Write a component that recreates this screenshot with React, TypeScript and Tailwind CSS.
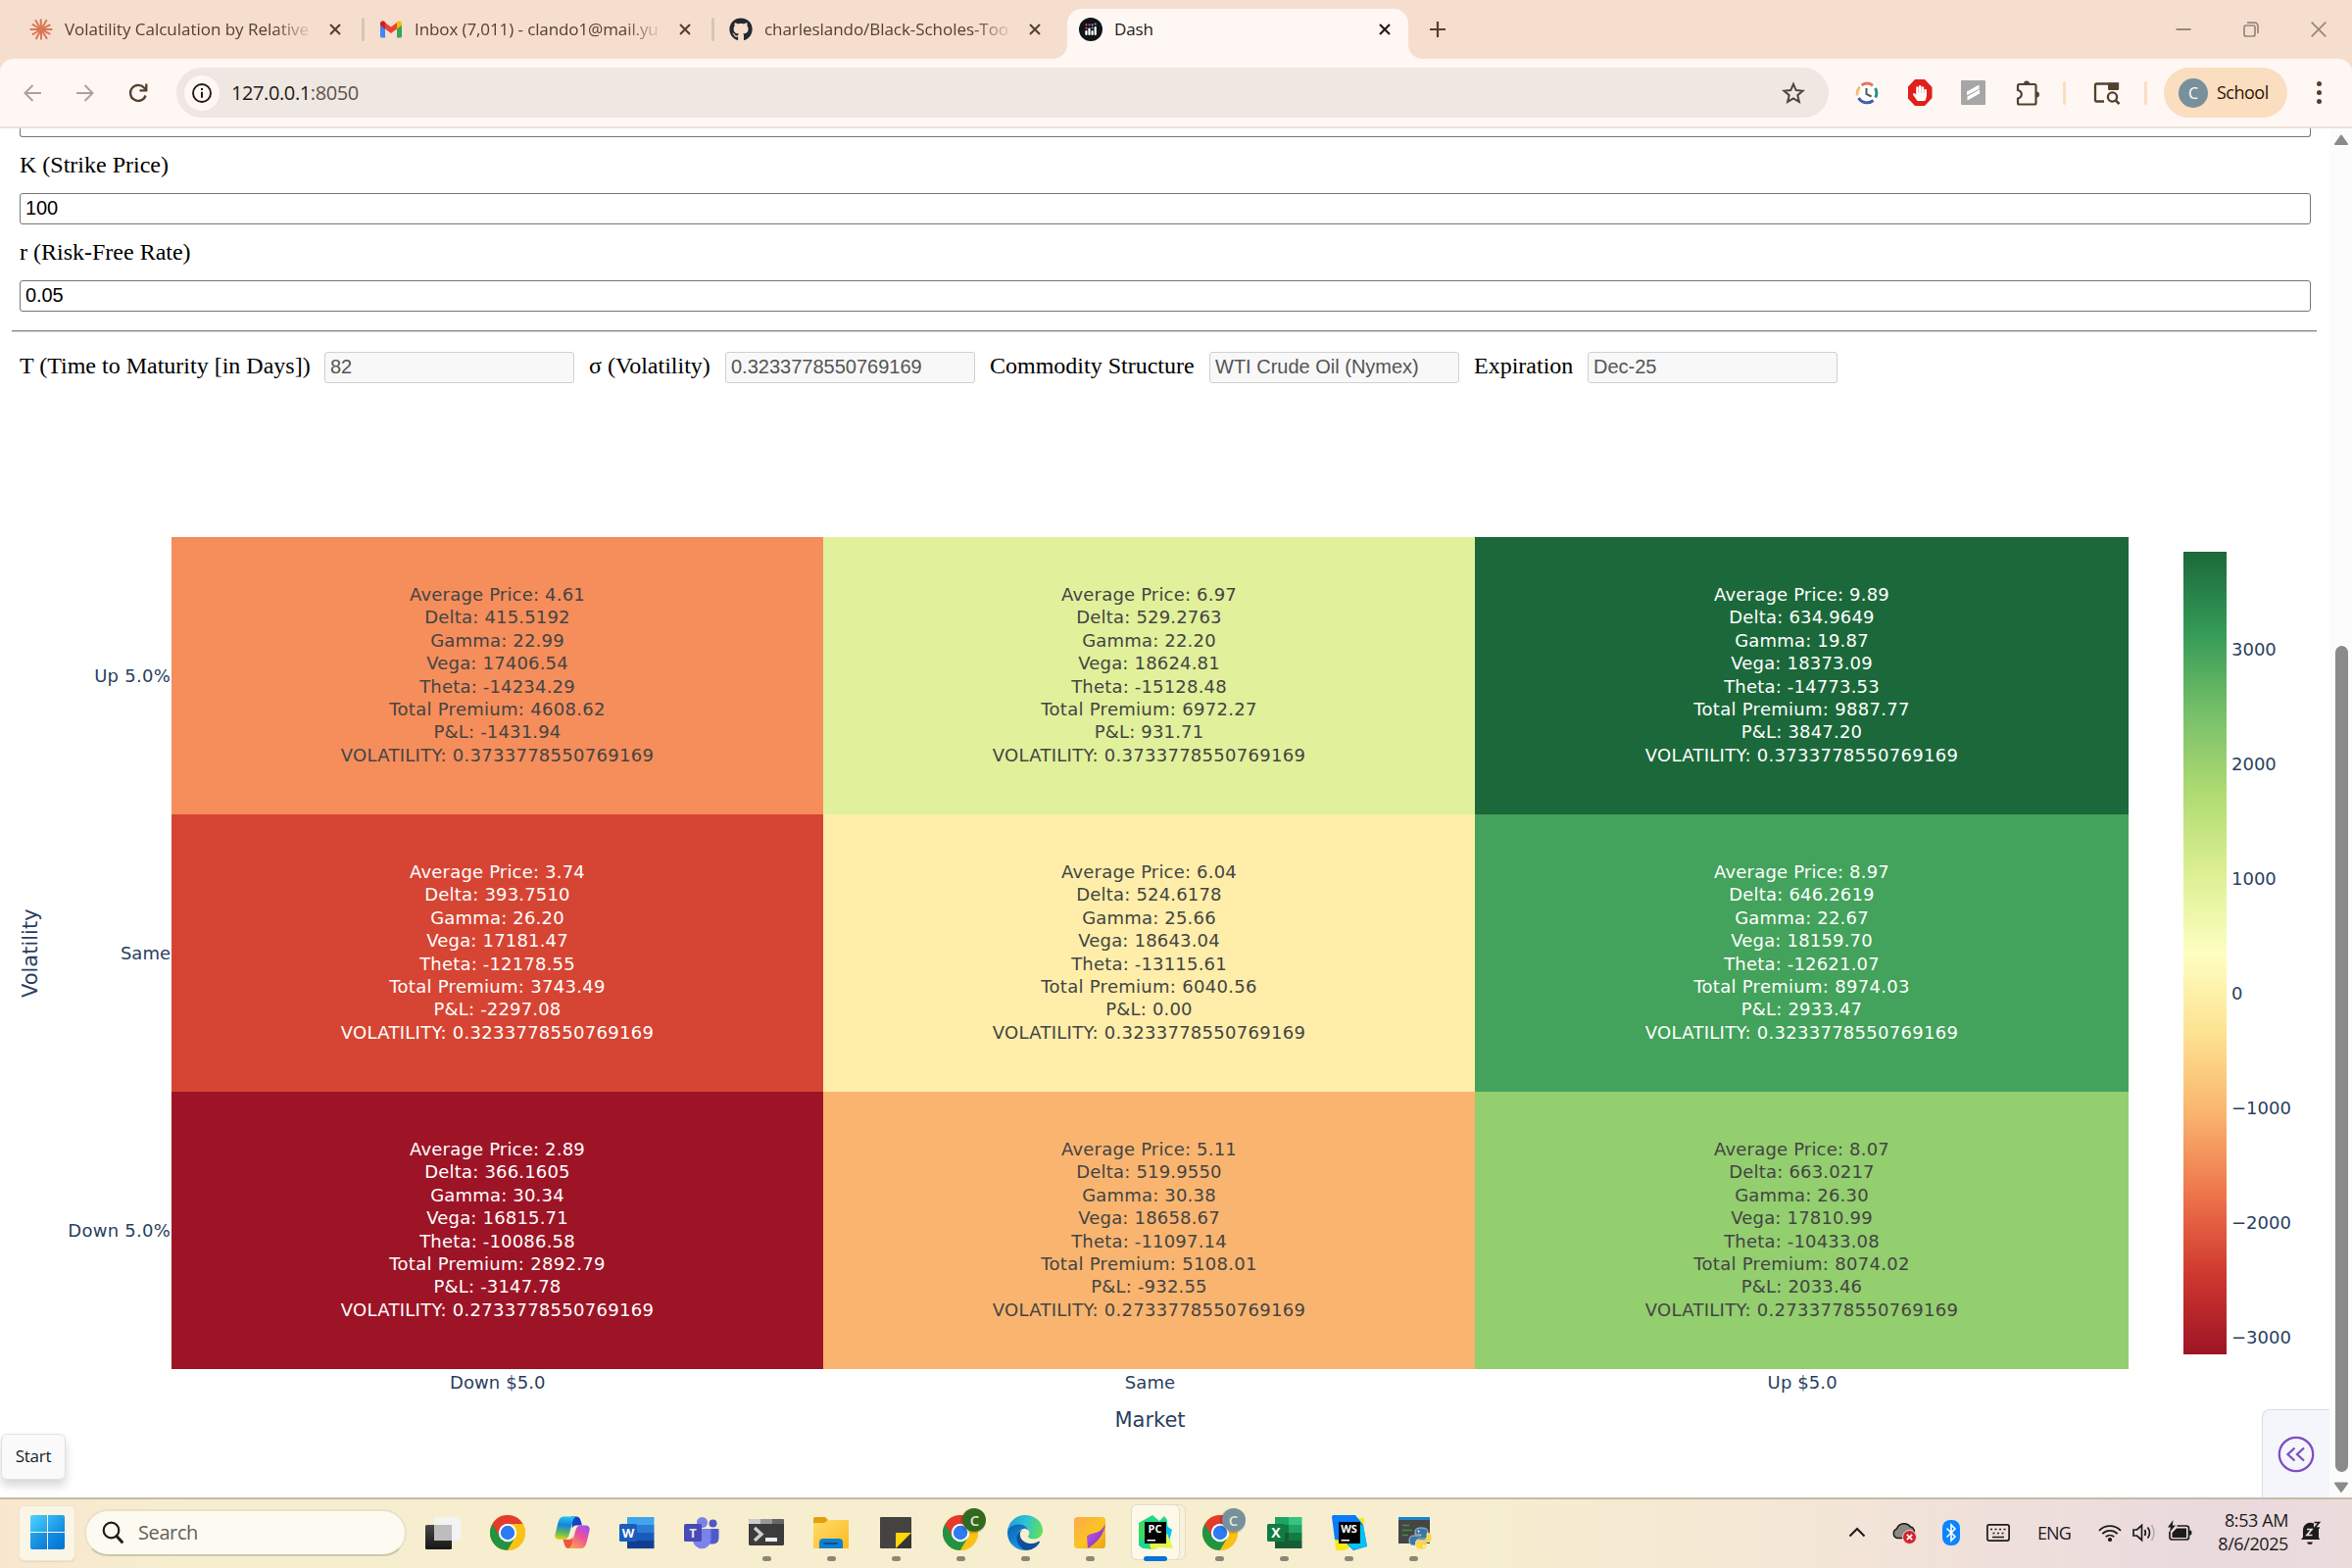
import React from "react";
import { FaGithub, FaHandPaper } from "react-icons/fa";

const UI = "font-['Open_Sans','Segoe_UI',sans-serif]";
const ARIAL = "font-['Liberation_Sans',Arial,sans-serif]";
const VERDANA = "font-['DejaVu_Sans',Verdana,sans-serif]";

/* ---------- tab strip ---------- */

function CloseX({ dark }: { dark?: boolean }) {
  return (
    <svg width="12" height="12" viewBox="0 0 12 12" className={dark ? "text-[#221a15]" : "text-[#54402f]"}>
      <path d="M1 1L11 11M11 1L1 11" stroke="currentColor" strokeWidth="2.1" />
    </svg>
  );
}

function ClaudeMark() {
  const rays = [0, 28, 58, 90, 118, 150, 180, 210, 238, 268, 300, 332];
  return (
    <svg width="24" height="24" viewBox="0 0 24 24">
      {rays.map((a, i) => (
        <line
          key={a}
          x1="12"
          y1="12"
          x2={12 + (i % 2 ? 10.6 : 11.4) * Math.cos((a * Math.PI) / 180)}
          y2={12 + (i % 2 ? 10.6 : 11.4) * Math.sin((a * Math.PI) / 180)}
          stroke="#d97757"
          strokeWidth="2"
        />
      ))}
    </svg>
  );
}

function GmailMark() {
  return (
    <svg width="24" height="24" viewBox="0 0 24 24">
      <path d="M1 6v13a1.5 1.5 0 0 0 1.5 1.5H6V10z" fill="#4285f4" />
      <path d="M23 6v13a1.5 1.5 0 0 1-1.5 1.5H18V10z" fill="#34a853" />
      <path d="M18 5v6.5l5-3.8V6c0-2.300-2.600-3.500-4.400-2.200z" fill="#fbbc04" />
      <path d="M6 11.500V5l6 4.600L18 5v6.500l-6 4.500z" fill="#ea4335" />
      <path d="M1 6v1.700l5 3.800V5l-.6-1.200C3.600 2.500 1 3.700 1 6z" fill="#c5221f" />
    </svg>
  );
}

function DashMark() {
  return (
    <svg width="24" height="24" viewBox="0 0 24 24">
      <circle cx="12" cy="12" r="12" fill="#111417" />
      <g fill="#fff">
        <rect x="6.300" y="13" width="2.200" height="5" rx="1" />
        <rect x="9.400" y="10.500" width="2.200" height="7.500" rx="1" />
        <rect x="12.500" y="13" width="2.200" height="5" rx="1" />
        <rect x="15.600" y="9" width="2.200" height="9" rx="1" />
      </g>
      <g fill="#e0457b">
        <circle cx="7.400" cy="10.800" r="1.100" />
        <circle cx="7.400" cy="7.300" r="1.100" />
        <circle cx="10.500" cy="7.300" r="1.100" />
      </g>
      <g fill="#8f8fc9">
        <circle cx="13.600" cy="7.300" r="1.100" />
        <circle cx="13.600" cy="10.500" r="1.100" />
        <circle cx="16.700" cy="6.500" r="1.100" />
      </g>
    </svg>
  );
}

function Tab({ icon, title, track }: { icon: React.ReactNode; title: string; track: string }) {
  return (
    <div className="flex h-full w-[357px] items-center">
      <div className="w-6">{icon}</div>
      <div
        className={`ml-3 w-[255px] overflow-hidden whitespace-nowrap text-[17px] leading-[60px] text-[#54402f] [mask-image:linear-gradient(to_right,black_84%,transparent)] ${track}`}
      >
        {title}
      </div>
      <div className="ml-[15px]">
        <CloseX />
      </div>
      <div className="ml-[21px] h-6 w-[3px] rounded bg-[#d5c4b8]" />
    </div>
  );
}

function TabStrip() {
  return (
    <div className={`flex h-[60px] items-center bg-[#f6decf] pl-[30px] ${UI}`}>
      <Tab icon={<ClaudeMark />} title="Volatility Calculation by Relative" track="tracking-[-0.02px]" />
      <Tab icon={<GmailMark />} title="Inbox (7,011) - clando1@mail.yu" track="tracking-[-0.1px]" />
      <div className="flex h-full w-[345px] items-center">
        <FaGithub size={24} color="#24292f" />
        <div className="ml-3 w-[255px] overflow-hidden whitespace-nowrap text-[17px] leading-[60px] tracking-[-0.05px] text-[#54402f] [mask-image:linear-gradient(to_right,black_84%,transparent)]">
          charleslando/Black-Scholes-Too
        </div>
        <div className="ml-[15px]">
          <CloseX />
        </div>
      </div>
      <div className="relative mt-[9px] flex h-[51px] w-[348px] items-center rounded-t-[15px] bg-[#fef7f4] pb-[9px] pl-3 pr-[18px] before:absolute before:-left-[14px] before:bottom-0 before:size-[14px] before:bg-[radial-gradient(circle_at_0_0,transparent_13.5px,#fef7f4_14px)] after:absolute after:-right-[14px] after:bottom-0 after:size-[14px] after:bg-[radial-gradient(circle_at_100%_0,transparent_13.5px,#fef7f4_14px)]">
        <DashMark />
        <div className="ml-3 flex-1 text-[17px] tracking-[-0.1px] text-[#221a15]">Dash</div>
        <CloseX dark />
      </div>
      <svg width="16" height="16" viewBox="0 0 16 16" className="ml-[22px]">
        <path d="M8 0v16M0 8h16" stroke="#54402f" strokeWidth="2.200" />
      </svg>
      <div className="ml-auto flex h-full w-[207px] items-center pb-[1px]">
        <div className="flex w-[69px] justify-center">
          <svg width="16" height="16" viewBox="0 0 16 16">
            <path d="M0.500 8h15" stroke="#96867b" strokeWidth="2" />
          </svg>
        </div>
        <div className="flex w-[69px] justify-center">
          <svg width="16" height="16" viewBox="0 0 16 16" fill="none" stroke="#96867b" strokeWidth="1.700">
            <rect x="1" y="4" width="11" height="11" rx="2" />
            <path d="M4 1.200h7.500a3.500 3.500 0 0 1 3.500 3.500V12" />
          </svg>
        </div>
        <div className="flex w-[69px] justify-center">
          <svg width="16" height="16" viewBox="0 0 16 16">
            <path d="M0.700 0.700L15.300 15.300M15.300 0.700L0.700 15.300" stroke="#96867b" strokeWidth="1.700" />
          </svg>
        </div>
      </div>
    </div>
  );
}

/* ---------- toolbar ---------- */

function Slot({ children }: { children: React.ReactNode }) {
  return <div className="flex w-[54px] shrink-0 items-center justify-center">{children}</div>;
}

function Toolbar() {
  return (
    <div className={`bg-[#f6decf] ${UI}`}>
      <div className="flex h-[71px] items-center rounded-t-[14px] border-b-2 border-[#eee0d8] bg-[#fef7f4] pl-[6px]">
        <Slot>
          <svg width="18" height="18" viewBox="0 0 18 18" fill="none" stroke="#ada19b" strokeWidth="2">
            <path d="M18 9H1.500M9.500 1L1.500 9l8 8" />
          </svg>
        </Slot>
        <Slot>
          <svg width="18" height="18" viewBox="0 0 18 18" fill="none" stroke="#ada19b" strokeWidth="2">
            <path d="M0 9h16.500M8.500 1l8 8-8 8" />
          </svg>
        </Slot>
        <Slot>
          <svg width="20" height="20" viewBox="0 0 20 20" fill="none" stroke="#54402f" strokeWidth="2.300">
            <path d="M17.600 12.500A8 8 0 1 1 16 4.500L18 6.800" />
            <path d="M18.300 0.500v6.800h-6.800" />
          </svg>
        </Slot>
        <div className="ml-3 flex h-[51px] w-[1686px] shrink-0 items-center rounded-full bg-[#efe7e2] pl-2 pr-[24px]">
          <div className="flex size-9 items-center justify-center rounded-full bg-[#fef7f4]">
            <svg width="20" height="20" viewBox="0 0 20 20">
              <circle cx="10" cy="10" r="9" fill="none" stroke="#221a15" strokeWidth="1.900" />
              <path d="M10 8.700v6M10 5v2" stroke="#221a15" strokeWidth="2" />
            </svg>
          </div>
          <div className="ml-[12px] flex-1 text-[20px] tracking-[-0.4px] text-[#221a15]">
            127.0.0.1<span className="text-[#5f534c]">:8050</span>
          </div>
          <svg width="24" height="24" viewBox="0 0 24 24" fill="none" stroke="#4a4541" strokeWidth="2">
            <path d="M12 2.800l2.700 6.300 6.800.6-5.200 4.500 1.600 6.700L12 17.300l-5.900 3.600 1.600-6.700-5.200-4.500 6.800-.6z" />
          </svg>
        </div>
        <div className="ml-3 flex">
          <Slot>
            <svg width="24" height="24" viewBox="0 0 24 24" fill="none">
              <circle cx="12" cy="12" r="12" fill="#fff" />
              <path d="M6.500 4A10 10 0 0 1 18 4.200" stroke="#e4775c" strokeWidth="3" />
              <path d="M20.500 7a10 10 0 0 1 .2 9.500" stroke="#2f9080" strokeWidth="3" />
              <path d="M18.500 19.500a10 10 0 0 1-15-2.500" stroke="#4a5ea8" strokeWidth="3" />
              <path d="M2.300 14.500A10 10 0 0 1 5 5.500" stroke="#f9bd77" strokeWidth="3" />
              <path d="M11.500 7v6l5 2.500" stroke="#555" strokeWidth="2" />
            </svg>
          </Slot>
          <Slot>
            <div className="flex h-[27px] w-[25px] items-center justify-center bg-[#e0201b] [clip-path:polygon(30%_0,70%_0,100%_30%,100%_70%,70%_100%,30%_100%,0_70%,0_30%)]">
              <FaHandPaper size={16} color="#fff" />
            </div>
          </Slot>
          <Slot>
            <svg width="25" height="25" viewBox="0 0 25 25">
              <rect width="25" height="25" rx="1" fill="#a6a6a6" />
              <path d="M6 11.500L18.500 4.500v4.300L6 15.300zM6.500 16.500L19 9.500v4L6.500 20.500z" fill="#fff" />
            </svg>
          </Slot>
          <Slot>
            <svg width="26" height="26" viewBox="0 0 26 26" className="ml-1">
              <path
                d="M3 5.500Q3 4 4.500 4H20q1.500 0 1.500 1.500V23q0 1.500-1.500 1.500H4.500Q3 24.500 3 23v-4.500q3.800-1 3.800-4.200T3 10z"
                fill="none"
                stroke="#54402f"
                strokeWidth="2.200"
              />
              <path d="M9 3.500a3 3 0 0 1 6 0zM22 11.500a3 3 0 0 1 0 6z" fill="#54402f" />
            </svg>
          </Slot>
        </div>
        <div className="ml-[11px] h-6 w-[3px] rounded bg-[#fbddc0]" />
        <div className="ml-[14px] flex">
          <Slot>
            <svg width="27" height="24" viewBox="0 0 27 24">
              <path d="M11 20.500H3.500Q2 20.500 2 19V4q0-1.500 1.500-1.500H25V8" fill="none" stroke="#54402f" strokeWidth="2.300" />
              <rect x="15" y="1.400" width="11" height="7.600" rx="1" fill="#54402f" />
              <circle cx="19.500" cy="16" r="4.600" fill="none" stroke="#54402f" strokeWidth="2.300" />
              <path d="M22.500 19l4 4" stroke="#54402f" strokeWidth="2.500" />
            </svg>
          </Slot>
        </div>
        <div className="ml-[12px] h-6 w-[3px] rounded bg-[#fbddc0]" />
        <div className="ml-[17px] flex h-[51px] w-[126px] items-center rounded-full bg-[#fbddc0] pl-[15px]">
          <div className="flex size-[30px] items-center justify-center rounded-full bg-[#78909c] text-[16px] text-white">C</div>
          <div className="ml-[9px] text-[18px] tracking-[-0.5px] text-[#2b1705]">School</div>
        </div>
        <div className="ml-[30px] flex flex-col gap-1">
          <div className="size-[5px] rounded-full bg-[#54402f]" />
          <div className="size-[5px] rounded-full bg-[#54402f]" />
          <div className="size-[5px] rounded-full bg-[#54402f]" />
        </div>
      </div>
    </div>
  );
}

/* ---------- dash form ---------- */

function WideInput({ value }: { value: string }) {
  return (
    <div className={`ml-5 h-8 w-[2338px] rounded-[3px] border-[1.5px] border-[#767676] bg-white pl-[5px] text-[20px] leading-[29px] tracking-[-0.1px] text-black ${ARIAL}`}>
      {value}
    </div>
  );
}

function ReadOnly({ label, value, width }: { label: string; value: string; width: string }) {
  return (
    <div className="flex items-center">
      <div className={`whitespace-nowrap pb-1 text-[24px] leading-7 ${width}`}>{label}</div>
      <div className={`mx-[15px] h-8 w-[255px] rounded-[3px] border-[1.5px] border-[#d0d0d0] bg-[#f8f8f8] pl-[5px] text-[20px] leading-[29px] text-[#545454] ${ARIAL}`}>
        {value}
      </div>
    </div>
  );
}

function Form() {
  return (
    <div className="font-['Liberation_Serif','Times_New_Roman',serif] text-black">
      <div className="ml-5 h-[9px] w-[2338px] rounded-b-[3px] border-x-[1.5px] border-b-[1.5px] border-[#767676]" />
      <div className="h-[57px] pl-5 text-[24px] leading-[57px]">K (Strike Price)</div>
      <WideInput value="100" />
      <div className="h-[57px] pl-5 text-[24px] leading-[57px]">r (Risk-Free Rate)</div>
      <WideInput value="0.05" />
      <div className="ml-3 mt-[19px] h-[2px] w-[2352px] border-t border-[#8a8a8a] bg-[#cfcfcf]" />
      <div className="mt-5 flex pl-5">
        <ReadOnly label="T (Time to Maturity [in Days])" value="82" width="w-[296px]" />
        <ReadOnly label="σ (Volatility)" value="0.3233778550769169" width="w-[124px]" />
        <ReadOnly label="Commodity Structure" value="WTI Crude Oil (Nymex)" width="w-[209px]" />
        <ReadOnly label="Expiration" value="Dec-25" width="w-[101px]" />
      </div>
    </div>
  );
}

/* ---------- heat map ---------- */

const V_UP = "0.3733778550769169";
const V_SAME = "0.3233778550769169";
const V_DOWN = "0.2733778550769169";

const cells: { cls: string; v: string[] }[] = [
  { cls: "bg-[#f58e5b] text-[#444]", v: ["4.61", "415.5192", "22.99", "17406.54", "-14234.29", "4608.62", "-1431.94", V_UP] },
  { cls: "bg-[#e1f09b] text-[#444]", v: ["6.97", "529.2763", "22.20", "18624.81", "-15128.48", "6972.27", "931.71", V_UP] },
  { cls: "bg-[#1b693a] text-white", v: ["9.89", "634.9649", "19.87", "18373.09", "-14773.53", "9887.77", "3847.20", V_UP] },
  { cls: "bg-[#d64533] text-white", v: ["3.74", "393.7510", "26.20", "17181.47", "-12178.55", "3743.49", "-2297.08", V_SAME] },
  { cls: "bg-[#feeeaa] text-[#444]", v: ["6.04", "524.6178", "25.66", "18643.04", "-13115.61", "6040.56", "0.00", V_SAME] },
  { cls: "bg-[#43a25b] text-white", v: ["8.97", "646.2619", "22.67", "18159.70", "-12621.07", "8974.03", "2933.47", V_SAME] },
  { cls: "bg-[#9d1426] text-white", v: ["2.89", "366.1605", "30.34", "16815.71", "-10086.58", "2892.79", "-3147.78", V_DOWN] },
  { cls: "bg-[#f9b570] text-[#444]", v: ["5.11", "519.9550", "30.38", "18658.67", "-11097.14", "5108.01", "-932.55", V_DOWN] },
  { cls: "bg-[#93ce6f] text-[#444]", v: ["8.07", "663.0217", "26.30", "17810.99", "-10433.08", "8074.02", "2033.46", V_DOWN] },
];

const names = ["Average Price", "Delta", "Gamma", "Vega", "Theta", "Total Premium", "P&L", "VOLATILITY"];

function HeatMap() {
  return (
    <div className={`mt-[157px] text-[18px] text-[#2a3f5f] ${VERDANA}`}>
      <div className="flex h-[849px]">
        <div className="flex w-[62px] items-center justify-center">
          <div className="-rotate-90 whitespace-nowrap text-[21px]">Volatility</div>
        </div>
        <div className="grid w-[113px] grid-rows-3 items-center pr-[1px] text-right tracking-[0.25px]">
          <div className="whitespace-nowrap">Up 5.0%</div>
          <div className="tracking-normal">Same</div>
          <div className="-ml-4 whitespace-nowrap">Down 5.0%</div>
        </div>
        <div className="grid w-[1997px] grid-cols-[665px_665px_667px] grid-rows-3">
          {cells.map((c, i) => (
            <div key={i} className={`flex flex-col items-center justify-center pb-[2px] leading-[23.4px] ${c.cls}`}>
              {names.map((n, j) => (
                <div key={n} className={j === 5 || j === 7 ? "tracking-[0.28px]" : "tracking-[0.18px]"}>
                  {n}: {c.v[j]}
                </div>
              ))}
            </div>
          ))}
        </div>
        <div className="ml-[56px] mt-[15px] h-[819px] w-[44px] bg-[linear-gradient(to_top,#9d1426,#cf382f,#ee754b,#f9b46e,#fde291,#fefec1,#dcef92,#afdb71,#76bf69,#349a56,#1b693a)]" />
        <div className="ml-[5px] mt-[56px]">
          {["3000", "2000", "1000", "0", "−1000", "−2000", "−3000"].map((t) => (
            <div key={t} className="h-[117px] leading-[117px]">
              {t}
            </div>
          ))}
        </div>
      </div>
      <div className="ml-[175px] grid w-[1997px] grid-cols-3 text-center leading-[27px] tracking-[0.1px]">
        <div>Down $5.0</div>
        <div>Same</div>
        <div>Up $5.0</div>
      </div>
      <div className="ml-[175px] mt-[10px] w-[1997px] text-center text-[21px] leading-[30px]">Market</div>
    </div>
  );
}

function ScrollBar() {
  return (
    <div className="flex h-full w-[23px] flex-col items-center bg-[#fcfcfc] pl-[1px]">
      <svg width="16" height="12" viewBox="0 0 16 12" className="mt-[6px]">
        <path d="M8 1.500L14 10H2z" fill="#8b8b8b" stroke="#8b8b8b" strokeWidth="2" strokeLinejoin="round" />
      </svg>
      <div className="mt-[510px] h-[843px] w-[13px] rounded-full bg-[#8b8b8b]" />
      <svg width="16" height="12" viewBox="0 0 16 12" className="mt-[10px]">
        <path d="M8 10L14 1.500H2z" fill="#8b8b8b" stroke="#8b8b8b" strokeWidth="2" strokeLinejoin="round" />
      </svg>
    </div>
  );
}

/* ---------- task bar ---------- */

function Chrome({ badge }: { badge?: string }) {
  return (
    <div className="relative">
      <svg width="36" height="36" viewBox="0 0 36 36">
        <circle cx="18" cy="18" r="18" fill="#fbc116" />
        <path d="M18 18L2.400 9A18 18 0 0 0 18 36l8.500-14z" fill="#23933f" />
        <path d="M18 36a18 18 0 0 0 15.600-27H18l7.800 13.500z" fill="#fbc116" />
        <path d="M2.400 9a18 18 0 0 1 31.200 0H18l-7.800 13.500z" fill="#e33b2e" />
        <circle cx="18" cy="18" r="9.200" fill="#fff" />
        <circle cx="18" cy="18" r="7.200" fill="#2d7bf0" />
      </svg>
      {badge && (
        <div className={`absolute -right-[8px] -top-[7px] flex size-6 items-center justify-center rounded-full text-[15px] font-semibold leading-none text-[#dfe6dc] shadow-[-1px_1px_0_1px_rgba(0,0,0,0.15)] ${badge}`}>C</div>
      )}
    </div>
  );
}

function TaskView() {
  return (
    <svg width="36" height="36" viewBox="0 0 36 36">
      <defs>
        <linearGradient id="tv" x1="0" y1="0" x2="0" y2="1">
          <stop offset="0" stopColor="#4a4846" />
          <stop offset="1" stopColor="#161616" />
        </linearGradient>
      </defs>
      <rect x="0" y="10" width="27" height="25" rx="1.500" fill="url(#tv)" />
      <rect x="9" y="2" width="27" height="24" rx="1.500" fill="#f3f3f3" />
      <rect x="9" y="10" width="18" height="16" fill="#bdbdbd" />
    </svg>
  );
}

function Copilot() {
  return (
    <svg width="36" height="36" viewBox="0 0 36 36">
      <defs>
        <linearGradient id="cpA" x1="0.300" y1="0" x2="0.200" y2="1">
          <stop offset="0" stopColor="#25c0f0" />
          <stop offset="0.350" stopColor="#1583dc" />
          <stop offset="0.700" stopColor="#5dbb5a" />
          <stop offset="1" stopColor="#f2cf1c" />
        </linearGradient>
        <linearGradient id="cpB" x1="0.800" y1="0" x2="0.200" y2="1">
          <stop offset="0" stopColor="#a050f0" />
          <stop offset="0.450" stopColor="#ee5097" />
          <stop offset="1" stopColor="#fba152" />
        </linearGradient>
      </defs>
      <path d="M17 1.500h5q3.500 0 4.500 4l1.500 5h-6q-3 0-4 3z" fill="#173fc8" />
      <path d="M19 34h-5q-3 0-4-4l-1.500-5h6q3 0 4-3z" fill="#f0543c" />
      <path d="M9 1.500h13q-2.500 1-3.500 5l-4 14q-1.200 4.500-5 4.500H4.500Q-.5 25 .5 19.500l3-12Q5 1.500 9 1.500z" fill="url(#cpA)" />
      <path d="M27 34H14q2.500-1 3.500-5l4-14q1.200-4.500 5-4.500h5q5 0 4 5.500l-3 12Q31 34 27 34z" fill="url(#cpB)" />
    </svg>
  );
}

function OfficeDoc({ letter, colors, box }: { letter: string; colors: string[]; box: string }) {
  return (
    <svg width="36" height="36" viewBox="0 0 36 36">
      {colors.map((c, i) => (
        <rect key={c} x="8" y={2 + i * 8} width="27.500" height="8.100" fill={c} />
      ))}
      <rect x="0" y="9" width="18" height="18" rx="1.500" fill={box} />
      <text x="9" y="22.500" textAnchor="middle" fontSize="13" fontWeight="700" fill="#fff" fontFamily="Open Sans">
        {letter}
      </text>
    </svg>
  );
}

function Excel() {
  return (
    <svg width="36" height="36" viewBox="0 0 36 36">
      <rect x="8" y="2" width="14" height="8" fill="#21a366" />
      <rect x="22" y="2" width="13.500" height="8" fill="#33c481" />
      <rect x="8" y="10" width="14" height="8" fill="#107c41" />
      <rect x="22" y="10" width="13.500" height="8" fill="#21a366" />
      <rect x="8" y="18" width="14" height="8" fill="#185c37" />
      <rect x="22" y="18" width="13.500" height="8" fill="#107c41" />
      <rect x="8" y="26" width="27.500" height="8" fill="#185c37" />
      <rect x="0" y="9" width="18" height="18" rx="1.500" fill="#107c41" />
      <text x="9" y="22.700" textAnchor="middle" fontSize="14" fontWeight="700" fill="#fff" fontFamily="Open Sans">X</text>
    </svg>
  );
}

function Teams() {
  return (
    <svg width="36" height="36" viewBox="0 0 36 36">
      <circle cx="29.500" cy="8.500" r="4" fill="#5059c9" />
      <path d="M23 14h12.500v9q0 6-6 6.500H23z" fill="#5059c9" />
      <circle cx="18.500" cy="7.500" r="5.500" fill="#7b83eb" />
      <path d="M9 14h18.500v11a9 9 0 0 1-18.500 0z" fill="#7b83eb" />
      <rect x="0" y="9" width="18" height="18" rx="1.500" fill="#484bb4" />
      <text x="9" y="22.500" textAnchor="middle" fontSize="13" fontWeight="700" fill="#e8e6fb" fontFamily="Open Sans">T</text>
    </svg>
  );
}

function Terminal() {
  return (
    <svg width="36" height="36" viewBox="0 0 36 36">
      <rect x="0" y="4" width="36" height="27" rx="1.500" fill="#3c3c3c" />
      <path d="M0 9V5.500Q0 4 1.500 4H12v5z" fill="#cccccc" />
      <rect x="12" y="4" width="12" height="5" fill="#999" />
      <path d="M24 4h10.500Q36 4 36 5.500V9H24z" fill="#666" />
      <path d="M6 13l7 6.500L6 26" fill="none" stroke="#cfcfcf" strokeWidth="3.400" />
      <rect x="17" y="23" width="12" height="4" rx="0.500" fill="#ededed" />
    </svg>
  );
}

function Explorer() {
  return (
    <svg width="36" height="36" viewBox="0 0 36 36">
      <defs>
        <linearGradient id="ex" x1="0" y1="0" x2="1" y2="1">
          <stop offset="0" stopColor="#ffdb6e" />
          <stop offset="1" stopColor="#fcbb1e" />
        </linearGradient>
      </defs>
      <path d="M0 3.500Q0 2 1.500 2H12l3 3-3 4H0z" fill="#e3a008" />
      <path d="M0 8h11l4-3h19.500Q36 5 36 6.500V34H0z" fill="url(#ex)" />
      <path d="M6 34v-6q0-4 4-4h16q4 0 4 4v6z" fill="#0f80d0" />
      <rect x="10" y="28" width="15" height="2" rx="1" fill="#0b4f94" />
    </svg>
  );
}

function StickyDark() {
  return (
    <svg width="36" height="36" viewBox="0 0 36 36">
      <rect x="2" y="2" width="32" height="32" rx="1" fill="#444342" />
      <path d="M34 18L18 34h15q1 0 1-1z" fill="#363534" />
      <path d="M18 18h16L18 34z" fill="#ffd60a" />
    </svg>
  );
}

function Edge() {
  return (
    <svg width="36" height="36" viewBox="0 0 36 36">
      <defs>
        <linearGradient id="edA" x1="0" y1="0.300" x2="1" y2="0.500">
          <stop offset="0" stopColor="#1b9de2" />
          <stop offset="0.500" stopColor="#2fc3d3" />
          <stop offset="1" stopColor="#5fe05a" />
        </linearGradient>
        <linearGradient id="edB" x1="0" y1="0" x2="0.500" y2="1">
          <stop offset="0" stopColor="#0d5fb0" />
          <stop offset="1" stopColor="#1497e8" />
        </linearGradient>
      </defs>
      <path d="M0 17A18 18 0 0 1 18 0c10 0 18 7 18 15.500 0 5.500-4 9-9 9-4 0-6-1.500-6-2.800 0-.9 1.300-1.300 1.300-3.700 0-4-4-8.500-10.500-8.500C6 9.500 1 13 0 17z" fill="url(#edA)" />
      <path d="M0 18c0-5 5.500-8.800 11.500-8.800 5.500 0 9.500 3.300 10.500 7.300-1.500-2.200-3.500-3-5.500-2.500-4.500 1-6.500 5-6.500 9 0 6 4 11 9 13C8 36.500 0 28 0 18z" fill="url(#edB)" />
      <path d="M15 15c-2 2-2.500 4-2 6.500 1.200 5 7 8 12 7.500 3-.2 5.200-1.200 6.500-2 1-.6 1.800.3 1.200 1.300C29.500 33.500 24 36 19 36c-5.500-1.500-9.500-6.500-9.500-12.500 0-3.500 2-7 5.500-8.500z" fill="#0f4f9c" />
    </svg>
  );
}

function StickyGold() {
  return (
    <svg width="36" height="36" viewBox="0 0 36 36">
      <defs>
        <linearGradient id="sg" x1="0" y1="0" x2="1" y2="1">
          <stop offset="0" stopColor="#fdaa4c" />
          <stop offset="0.550" stopColor="#fcc422" />
          <stop offset="1" stopColor="#e8a414" />
        </linearGradient>
        <linearGradient id="sp" x1="0" y1="0" x2="1" y2="1">
          <stop offset="0.200" stopColor="#b556ea" />
          <stop offset="1" stopColor="#7a28a8" />
        </linearGradient>
      </defs>
      <rect x="2" y="2" width="32" height="32" rx="3.500" fill="url(#sg)" />
      <path d="M34 9q-3 7-10 9-9 2-9 4 .5 5 1 12Q32 24 34 9z" fill="url(#sp)" />
    </svg>
  );
}

function Jet({ code, variant }: { code: string; variant: "pc" | "ws" }) {
  return (
    <svg width="36" height="36" viewBox="0 0 36 36">
      {variant === "pc" ? (
        <>
          <path d="M1 8L15 0l7 6 5-5 3 4 1 17-14 13-12-1-4-3z" fill="#21d789" />
          <path d="M1 10l6-4 3 14-8 6z" fill="#3ddc60" />
          <path d="M28 10l7 5-3 12h-6z" fill="#07c3f2" />
          <path d="M12 30l18-11 6 15-14-1-8 3z" fill="#e6f545" />
        </>
      ) : (
        <>
          <path d="M3 22l9-4 15-15h6l-2 22-18 11H4z" fill="#f6ea17" />
          <path d="M0 1.500Q0 0 2 0h22l8 10 4 22-14 4-10-10L3 25z" fill="#087cfa" />
          <path d="M26 8l6 3 4 21-14 3-8-8z" fill="#07c3f2" />
        </>
      )}
      <rect x="7" y="7" width="22" height="22" fill="#000" />
      <text x="17.500" y="17.500" textAnchor="middle" fontSize="11" fontWeight="700" fill="#fff" fontFamily="Open Sans">
        {code}
      </text>
      <rect x="9.500" y="25" width="8.500" height="1.500" fill="#fff" />
    </svg>
  );
}

function PyWindow() {
  return (
    <svg width="36" height="36" viewBox="0 0 36 36">
      <rect x="2" y="2" width="32" height="27" fill="#454545" />
      <rect x="2" y="2" width="32" height="3" fill="#1a86c9" />
      <path d="M6 10.500h7M6 15.500h10M6 20.500h6" stroke="#3f9142" strokeWidth="1.300" />
      <path d="M24 13q-5 0-5 4v3h6v1h-8q-4 0-4 5t4 5h3v-4q0-3 4-3h5q3 0 3-3v-4q0-4-6-4z" fill="#3b77a9" stroke="#dfe6ea" strokeWidth="0.700" />
      <path d="M25.500 35q5 0 5-3.500v-3h-6v-1h8q3.500 0 3.500-4.500 0-4.500-3.500-4.500H31v4q0 3-3.500 3h-5q-3 0-3 3v3q0 3.500 6 3.500z" fill="#ffd83f" stroke="#f4eecb" strokeWidth="0.700" />
      <circle cx="22.500" cy="16.500" r="1" fill="#fff" />
      <circle cx="28" cy="31.800" r="1" fill="#fff" />
    </svg>
  );
}

const apps: { icon: React.ReactNode; state: "off" | "open" | "active" }[] = [
  { icon: <TaskView />, state: "off" },
  { icon: <Chrome />, state: "off" },
  { icon: <Copilot />, state: "off" },
  { icon: <OfficeDoc letter="W" colors={["#41a5ee", "#2b7cd3", "#185abd", "#103f91"]} box="#1a5dbe" />, state: "off" },
  { icon: <Teams />, state: "off" },
  { icon: <Terminal />, state: "open" },
  { icon: <Explorer />, state: "open" },
  { icon: <StickyDark />, state: "open" },
  { icon: <Chrome badge="bg-[#33691e]" />, state: "open" },
  { icon: <Edge />, state: "open" },
  { icon: <StickyGold />, state: "open" },
  { icon: <Jet code="PC" variant="pc" />, state: "active" },
  { icon: <Chrome badge="bg-[#78909c]" />, state: "open" },
  { icon: <Excel />, state: "open" },
  { icon: <Jet code="WS" variant="ws" />, state: "open" },
  { icon: <PyWindow />, state: "open" },
];

function TaskBar() {
  return (
    <div className={`flex h-[72px] items-start border-t-2 border-[#c4bba6] bg-[linear-gradient(to_right,#f9e6d0_0px,#f6eecf_190px,#f6eecf_1500px,#f4e6d6_1850px,#efdfdb_2050px,#ead9dd_2270px,#eddcdc_2400px)] pl-[19px] text-[#1b1b1b] ${UI}`}>
      <div className="mt-[6px] flex h-[57px] w-[58px] items-center justify-center rounded-md border border-[#efe6d0] bg-[#fbf5e6] pb-[3px] shadow-[0_1px_1px_rgba(0,0,0,0.08)]">
        <div className="grid grid-cols-2 gap-px">
          <div className="size-[17px] rounded-tl-[2px] bg-linear-to-br from-[#4fd3fb] to-[#1da2e8]" />
          <div className="size-[17px] rounded-tr-[2px] bg-linear-to-br from-[#35b9f1] to-[#0f87df]" />
          <div className="size-[17px] rounded-bl-[2px] bg-linear-to-br from-[#28a5ea] to-[#067bd8]" />
          <div className="size-[17px] rounded-br-[2px] bg-linear-to-br from-[#1590e2] to-[#0373d2]" />
        </div>
      </div>
      <div className="ml-[9px] mt-[10px] flex h-[48px] w-[329px] items-center rounded-full border-2 border-[#e9e2c6] border-b-[#cdc7ac] bg-[#fdfaf1] pl-[15px]">
        <svg width="24" height="24" viewBox="0 0 24 24" fill="none" stroke="#1d1d1d" strokeLinecap="round">
          <circle cx="10.500" cy="9.500" r="7.800" strokeWidth="2.200" />
          <path d="M16 15.500l5.500 6" strokeWidth="3" />
        </svg>
        <div className="ml-[14px] text-[20px] tracking-[-0.4px] text-[#62605a]">Search</div>
      </div>
      <div className="ml-[4px] flex">
        {apps.map((a, i) => (
          <div key={i} className="relative flex h-[70px] w-[66.05px] flex-col items-center pt-4">
            {a.state === "active" && (
              <>
                <div className="absolute left-2 top-[5px] h-[57px] w-[56px] rounded-md border border-[#e3dcc4] bg-[#f8f2dc]" />
                <div className="absolute left-2 top-[5px] h-[57px] w-[50px] rounded-md border border-[#e3dcc4] bg-[#fcf8ea]" />
              </>
            )}
            <div className="relative">{a.icon}</div>
            {a.state === "open" && <div className="mt-[6px] h-[5px] w-[9px] rounded-full bg-[#8b8675]" />}
            {a.state === "active" && <div className="relative mt-[6px] h-[5px] w-6 rounded-full bg-[#0673d6]" />}
          </div>
        ))}
      </div>
      <div className="ml-auto flex h-[67px] items-center">
        <svg width="18" height="11" viewBox="0 0 18 11" className="mr-[26px]">
          <path d="M1.500 9.500L9 2l7.500 7.500" fill="none" stroke="#1b1b1b" strokeWidth="2" />
        </svg>
        <svg width="26" height="24" viewBox="0 0 26 24" className="mr-[26px]">
          <path d="M6 17.500a5 5 0 0 1-.5-9.500A8 8 0 0 1 19.500 6q3.500.5 4 5L14 17.500z" fill="#8d8985" stroke="#1b1b1b" strokeWidth="1.500" />
          <circle cx="18.500" cy="16.500" r="7" fill="#d81f2a" stroke="#f0e0dc" />
          <path d="M15.800 13.800l5.400 5.400M21.200 13.800l-5.400 5.400" stroke="#fff" strokeWidth="1.800" />
        </svg>
        <svg width="18" height="26" viewBox="0 0 18 26" className="mr-[27px]">
          <rect width="18" height="26" rx="8" fill="#0a84ff" />
          <path d="M4.500 8.500l8.500 8.500-4 4V5l4 4-8.500 8.500" fill="none" stroke="#fff" strokeWidth="1.600" />
        </svg>
        <svg width="24" height="18" viewBox="0 0 24 18" className="mr-[28px]">
          <rect x="0.900" y="0.900" width="22.200" height="16.200" rx="2" fill="none" stroke="#1b1b1b" strokeWidth="1.700" />
          <path d="M4 5.500h2M8.500 5.500h2M13 5.500h2M17.500 5.500h2M6.500 9.500h2M11 9.500h2M15.500 9.500h2M6 13.500h12" stroke="#1b1b1b" strokeWidth="1.700" />
        </svg>
        <div className="w-[35px] pt-[1px] text-[18px] tracking-[-0.9px]">ENG</div>
        <svg width="24" height="18" viewBox="0 0 24 18" className="ml-[27px]" fill="none" stroke="#1b1b1b" strokeWidth="1.800">
          <path d="M1 6.800a15.500 15.500 0 0 1 22 0M4.300 10a11 11 0 0 1 15.400 0M7.700 13.200a6.500 6.500 0 0 1 8.600 0" />
          <circle cx="12" cy="16" r="1.500" fill="#1b1b1b" stroke="none" />
          <circle cx="12" cy="16" r="1.200" fill="#1b1b1b" />
        </svg>
        <svg width="25" height="20" viewBox="0 0 25 20" className="ml-[11px]" fill="none" stroke="#1b1b1b" strokeWidth="1.700">
          <path d="M1 7v6h3.500l5 4.500v-15L4.500 7z" />
          <path d="M12.500 7q1.700 3 0 6M15.500 4.500q4 5.500 0 11" />
          <path d="M19.500 2q5 8 0 16" stroke="#b9aeac" />
        </svg>
        <svg width="25" height="22" viewBox="0 0 25 22" className="mb-[3px] ml-[11px]">
          <path d="M9.500 6H19q2.500 0 2.500 2.500v9q0 2.500-2.500 2.500H4.500Q2 20 2 17.500V12" fill="none" stroke="#1b1b1b" strokeWidth="1.700" />
          <path d="M9 8.500h10v9.500H4.500v-5z" fill="#1b1b1b" />
          <path d="M22 10.500h1q1.500 0 1.500 2.500t-1.500 2.500h-1z" fill="#1b1b1b" />
          <path d="M5.500 0L0 7.500h3L1.500 13 8 5.500H4.800z" fill="#1b1b1b" />
        </svg>
        <div className="ml-[14px] w-[84px] whitespace-nowrap pb-[2px] text-right text-[18px] leading-[24px] tracking-[-0.4px]">
          <div>8:53 AM</div>
          <div>8/6/2025</div>
        </div>
        <svg width="22" height="26" viewBox="0 0 22 26" className="ml-[12px] mr-[31px]">
          <path d="M3 17.500V10a7.500 7.500 0 0 1 11-6.500V8h5v9.500l1 2.500H1z" fill="#1b1b1b" />
          <path d="M7 22.500h6q-.5 2.500-3 2.500t-3-2.500z" fill="#1b1b1b" />
          <path d="M7 9.500h5l-5 6h5.500" fill="none" stroke="#f0e0dc" strokeWidth="1.700" />
          <path d="M14.500 2.500h5l-4.500 5.500h5" fill="none" stroke="#1b1b1b" strokeWidth="1.700" />
        </svg>
      </div>
    </div>
  );
}

export default function App() {
  return (
    <div className="flex h-[1600px] w-[2400px] flex-col overflow-hidden bg-white">
      <TabStrip />
      <Toolbar />
      <div className="relative flex h-[1397px]">
        <div className="w-[2377px] overflow-hidden">
          <Form />
          <HeatMap />
        </div>
        <ScrollBar />
        <div className="absolute bottom-0 right-[23px] flex h-[90px] w-[69px] items-center justify-center rounded-tl-[8px] border-l border-t border-[#d6deea] bg-[#f4f6fb]">
          <svg width="38" height="38" viewBox="0 0 38 38" fill="none" stroke="#7e4ec4" strokeWidth="2.300">
            <circle cx="19" cy="19" r="17.200" />
            <path d="M17.500 12.500l-7 6.500 7 6.500M27 12.500l-7 6.500 7 6.500" />
          </svg>
        </div>
        <div className={`absolute bottom-[18px] left-[1px] flex h-[47px] w-[66px] items-center justify-center rounded-md border border-[#e2e2e2] bg-[#fafafa] pb-[2px] text-[17px] tracking-[-0.3px] text-[#1b1b1b] shadow-[0_6px_10px_rgba(0,0,0,0.16)] ${UI}`}>
          Start
        </div>
      </div>
      <TaskBar />
    </div>
  );
}
